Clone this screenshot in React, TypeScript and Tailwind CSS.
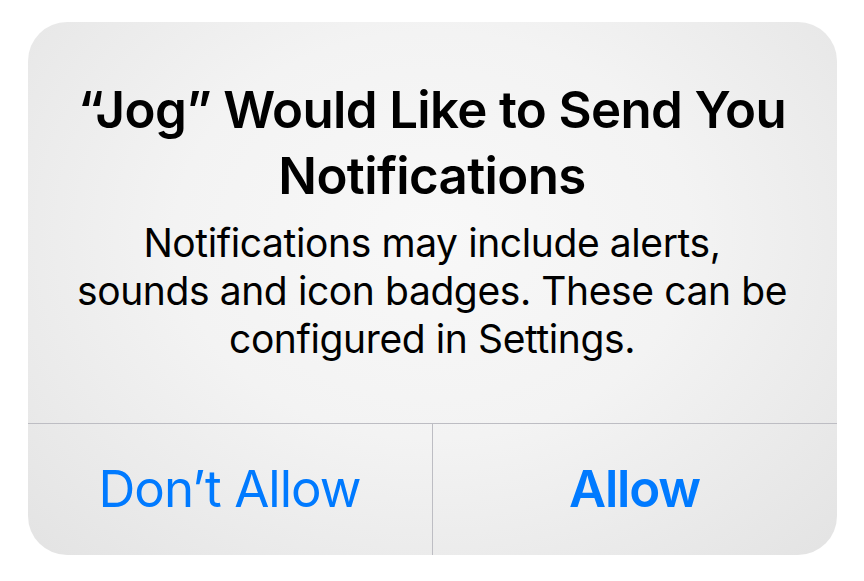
import React from "react";

export default function App() {
  return (
    <div className="w-[864px] h-[581px] bg-white flex justify-center pt-[22px]" style={{ fontFamily: "Inter, 'Noto Sans', sans-serif" }}>
      <div className="w-[809px] h-[533px] rounded-[39px] overflow-hidden flex flex-col bg-[radial-gradient(ellipse_at_50%_40%,#f8f8f8_0%,#f3f3f3_45%,#e3e3e3_100%)]">
        <div className="h-[401px] flex flex-col items-center pt-[55px] text-center text-black">
          <div className="text-[51px] leading-[66px] font-semibold tracking-[-0.65px]">
            “Jog” Would Like to Send You
            <br />
            Notifications
          </div>
          <div className="mt-[10px] text-[39px] leading-[48px] font-normal tracking-[-0.4px]">
            Notifications may include alerts,
            <br />
            sounds and icon badges. These can be
            <br />
            configured in Settings.
          </div>
        </div>
        <div className="h-[132px] flex border-t border-[#bdbdc3]">
          <div className="flex-1 flex items-center justify-center text-[51px] text-[#007aff] font-normal tracking-[-1px] border-r border-[#bdbdc3]">
            Don’t Allow
          </div>
          <div className="flex-1 flex items-center justify-center text-[51px] text-[#007aff] font-semibold tracking-[-1.2px]">
            Allow
          </div>
        </div>
      </div>
    </div>
  );
}
